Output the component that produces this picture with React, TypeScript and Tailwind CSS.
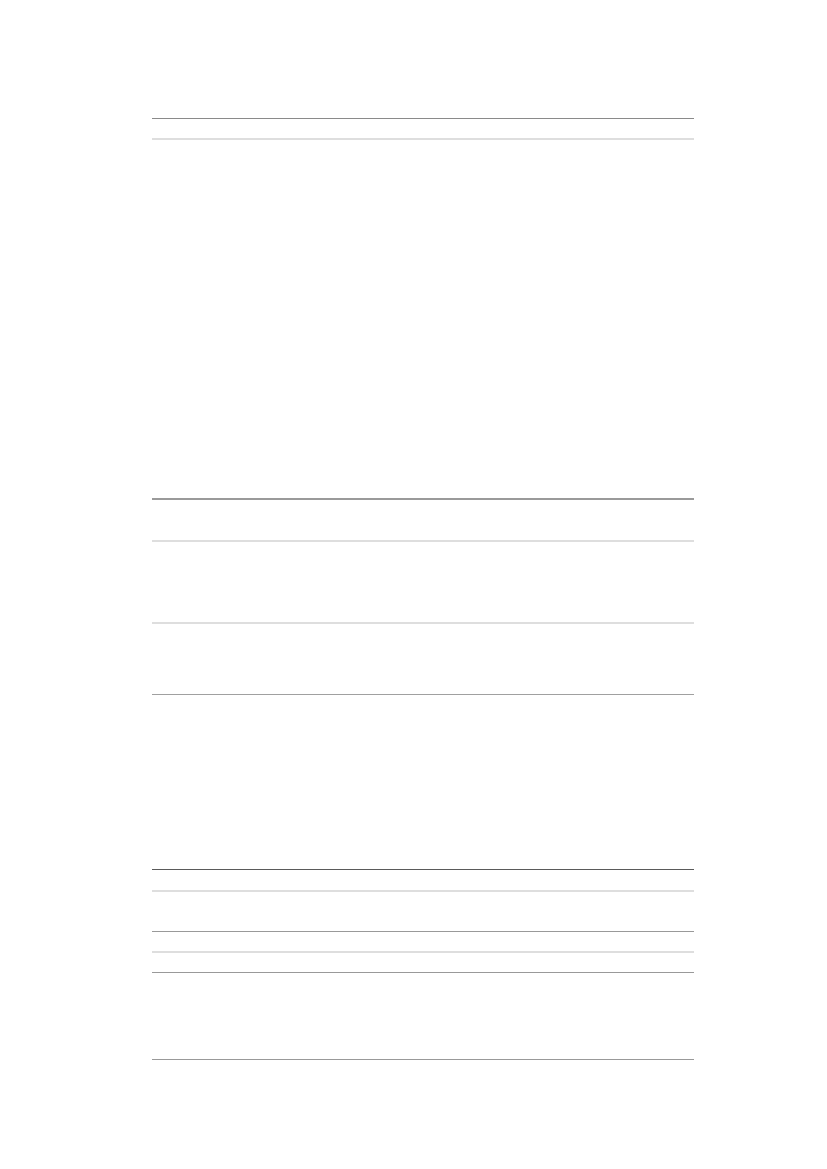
export default function App() {
  // rule lines only; the page body holds no visible text
  const rows: { h: string; line: string }[] = [
    { h: 'h-[20px]', line: 'border-t border-[#8a8a8a]' },
    { h: 'h-[360px]', line: 'border-t-2 border-[#dedede]' },
    { h: 'h-[42px]', line: 'border-t-2 border-[#9a9a9a]' },
    { h: 'h-[82px]', line: 'border-t-2 border-[#dedede]' },
    { h: 'h-[72px]', line: 'border-t-2 border-[#dedede]' },
    { h: 'h-[175px]', line: 'border-t border-[#a0a0a0]' },
    { h: 'h-[21px]', line: 'border-t border-[#5a5a5a]' },
    { h: 'h-[41px]', line: 'border-t-2 border-[#dedede]' },
    { h: 'h-[20px]', line: 'border-t border-[#999999]' },
    { h: 'h-[21px]', line: 'border-t-2 border-[#dedede]' },
    { h: 'h-[87px]', line: 'border-t border-[#999999]' },
    { h: 'h-[1px]', line: 'border-t border-[#999999]' },
  ];
  return (
    <div className="min-h-[1169px] bg-white pt-[118px] pl-[152px]">
      <div className="flex w-[542px] flex-col">
        {rows.map((r, i) => (
          <div key={i} className={`${r.h} ${r.line}`} />
        ))}
      </div>
    </div>
  );
}
